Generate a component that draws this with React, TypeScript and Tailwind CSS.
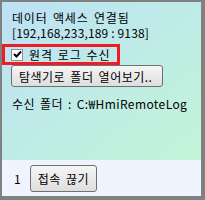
import React from 'react';

const font = { fontFamily: '"Noto Sans CJK KR", "Liberation Sans", sans-serif' };

function CheckBox() {
  return (
    <span className="flex h-[12px] w-[12px] items-center justify-center border border-[#8e8f8f] bg-white">
      <svg width="9" height="9" viewBox="0 0 9 9">
        <path d="M1 4 L3.5 6.5 L8 1.5" fill="none" stroke="#000" strokeWidth="2" />
      </svg>
    </span>
  );
}

export default function App() {
  return (
    <div className="h-[200px] w-[205px] bg-[#808080] pt-[2px] pl-[2px] pr-[4px] pb-[4px]" style={font}>
      <div className="flex h-full w-full flex-col text-[12px] text-black">
        {/* upper panel */}
        <div className="flex h-[158px] flex-col bg-linear-to-br from-[#bde1f6] to-[#c1f5d6] pt-[8px]">
          <div className="h-[15px] pl-[10px] leading-[15px] tracking-[0.8px] [word-spacing:2px]">데이터 액세스 연결됨</div>
          <div className="h-[15px] pl-[10px] leading-[15px] tracking-[0.15px]">[192,168,233,189 : 9138]</div>
          <div className="mt-[4px] flex h-[21px] w-[118px] items-center border-[3px] border-[#ee1c24]">
            <span className="ml-[6px]">
              <CheckBox />
            </span>
            <span className="ml-[6px] leading-[15px] tracking-[1px] [word-spacing:1px]">원격 로그 수신</span>
          </div>
          <button className="ml-[9px] flex h-[22px] w-[152px] items-center rounded-[3px] border border-[#707070] bg-linear-to-b from-[#f6f6f6] to-[#dedede] pl-[7px] leading-[15px] tracking-[0.5px] [word-spacing:2px]">
            탐색기로 폴더 열어보기..
          </button>
          <div className="mt-[9px] h-[15px] pl-[10px] leading-[15px] tracking-[0.4px] [word-spacing:2px]">수신 폴더 : C:₩HmiRemoteLog</div>
        </div>
        {/* lower panel */}
        <div className="flex h-[36px] items-center bg-[#f0f4fe]">
          <span className="ml-[12px] w-[16px] leading-[15px]">1</span>
          <button className="flex h-[27px] w-[67px] items-center justify-center rounded-[3px] border border-[#707070] bg-linear-to-b from-[#f6f6f6] to-[#dedede] leading-[15px] tracking-[0.5px] [word-spacing:2px]">
            접속 끊기
          </button>
        </div>
      </div>
    </div>
  );
}
